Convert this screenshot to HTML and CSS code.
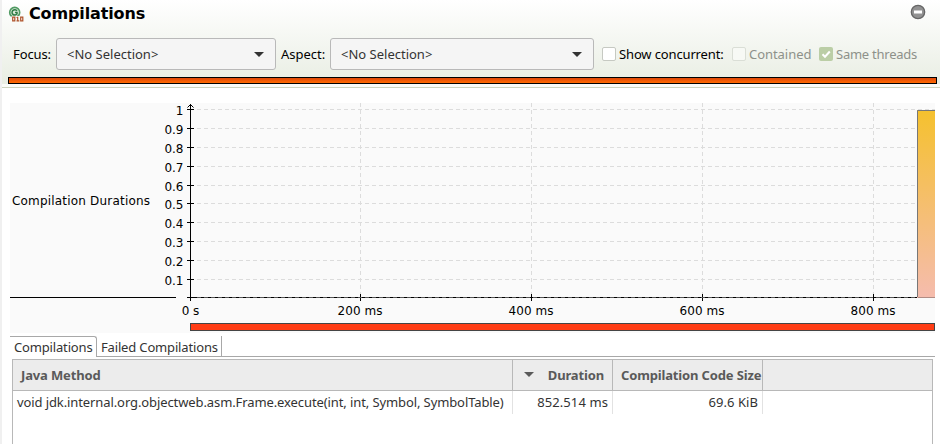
FILE: index.html
```
<!DOCTYPE html>
<html lang="en">
<head>
<meta charset="utf-8">
<title>Compilations</title>
<link rel="stylesheet" href="styles.css">
</head>
<body>
<main class="page">
  <header class="header">
    <div class="title-row">
      <svg class="logo" width="16" height="16" viewBox="0 0 16 16">
        <circle cx="6.700" cy="6.400" r="5" fill="#dcebdc" stroke="#4f9a62" stroke-width="1.600"/>
        <path d="M9 4.900A2.700 2.700 0 1 0 9 7.900V6.600H7" fill="none" stroke="#2f7d45" stroke-width="1.500"/>
        <path d="M3.500 10h12v6h-12z" fill="#f7faf5"/>
        <path d="M4.700 11.200h2.100v3.600h-2.100zM12.700 11.200h2.100v3.600h-2.100zM9.700 10.700v4.600M8.500 11.500h1.200M8.500 14.800h2.800" fill="none" stroke="#b0532c" stroke-width="1.200"/>
      </svg>
      <h1 class="title">Compilations</h1>
      <svg class="collapse" width="16" height="16" viewBox="0 0 16 16">
        <circle cx="8" cy="8" r="6.700" fill="#929292" stroke="#666" stroke-width="1.300"/>
        <rect x="4" y="6.500" width="8" height="3" fill="#fff"/>
      </svg>
    </div>
    <div class="controls">
      <span class="label focus">Focus:</span>
      <div class="select first"><span class="value">&lt;No Selection&gt;</span><i class="arrow"></i></div>
      <span class="label aspect">Aspect:</span>
      <div class="select second"><span class="value">&lt;No Selection&gt;</span><i class="arrow"></i></div>
      <i class="box"></i><span class="label concurrent">Show concurrent:</span>
      <i class="box off"></i><span class="label muted contained">Contained</span>
      <i class="box checked"><svg width="14" height="14" viewBox="0 0 14 14"><path d="M3.500 7.200l2.500 2.500 4.800-5.200" fill="none" stroke="#fff" stroke-width="2"/></svg></i><span class="label muted threads">Same threads</span>
    </div>
    <div class="range"></div>
  </header>

  <svg class="chart" width="925" height="230" viewBox="10 103 925 230">
    <defs>
      <linearGradient id="fill" x1="0" y1="0" x2="0" y2="1">
        <stop offset="0" stop-color="#f5c12e"/><stop offset="1" stop-color="#f5bcae"/>
      </linearGradient>
    </defs>
    <rect x="10" y="103" width="925" height="230" fill="#fafafa"/>
    <path class="grid" d="M197 109.500H935M197 128.500H935M197 147.500H935M197 166.500H935M197 185.500H935M197 203.500H935M197 222.500H935M197 241.500H935M197 260.500H935M197 279.500H935M360.500 103V297M531.500 103V297M702.500 103V297M873.500 103V297"/>
    <path class="axis" d="M10 297.500H176M187 297.500H935M190.500 104V301M187.500 107.500l3-3 3 3M187 109.500h7M187 128.500h7M187 147.500h7M187 166.500h7M187 185.500h7M187 203.500h7M187 222.500h7M187 241.500h7M187 260.500h7M187 279.500h7M360.500 294v7M531.500 294v7M702.500 294v7M873.500 294v7"/>
    <path d="M197 297.500H917" stroke="#555" stroke-dasharray="4 3"/>
    <rect x="917" y="110" width="18" height="188" fill="url(#fill)"/>
    <path d="M935 110.500H917.500V297" fill="none" stroke="#777"/>
    <path d="M918 297.500h17" stroke="#b08c84"/>
    <rect x="190.500" y="323.500" width="744" height="7" fill="#ff3c14" stroke="#444"/>
    <text x="12" y="205" textLength="138">Compilation Durations</text>
    <g text-anchor="end">
      <text x="183.500" y="115">1</text>
      <text x="183.500" y="134">0.9</text>
      <text x="183.500" y="153">0.8</text>
      <text x="183.500" y="172">0.7</text>
      <text x="183.500" y="191">0.6</text>
      <text x="183.500" y="209">0.5</text>
      <text x="183.500" y="228">0.4</text>
      <text x="183.500" y="247">0.3</text>
      <text x="183.500" y="266">0.2</text>
      <text x="183.500" y="285">0.1</text>
    </g>
    <g text-anchor="middle">
      <text x="190.500" y="315">0 s</text>
      <text x="360" y="315" textLength="45">200 ms</text>
      <text x="531" y="315" textLength="45">400 ms</text>
      <text x="702" y="315" textLength="45">600 ms</text>
      <text x="873" y="315" textLength="45">800 ms</text>
    </g>
  </svg>

  <nav class="tabs">
    <div class="tab active"><span>Compilations</span></div>
    <div class="tab"><span class="failed">Failed Compilations</span></div>
    <div class="tab-rest"></div>
  </nav>

  <section class="table">
    <div class="row head">
      <div class="cell"><span class="h-method">Java Method</span></div>
      <div class="cell right"><i class="sort"></i><span class="h-duration">Duration</span></div>
      <div class="cell size"><span class="h-size">Compilation Code Size</span></div>
      <div class="cell last"></div>
    </div>
    <div class="row body">
      <div class="cell"><span class="method">void jdk.internal.org.objectweb.asm.Frame.execute(int, int, Symbol, SymbolTable)</span></div>
      <div class="cell right"><span class="duration">852.514 ms</span></div>
      <div class="cell right"><span class="kib">69.6 KiB</span></div>
      <div class="cell last"></div>
    </div>
  </section>
</main>
</body>
</html>
```
FILE: styles.css
```
* { box-sizing: border-box; }
body {
  margin: 0;
  background: #fff;
  font: 13px/18px "Noto Sans", "Open Sans", sans-serif;
  color: #333;
}
.page {
  height: 444px;
  overflow: hidden;
  border-left: 2px solid #f0f0f0;
  white-space: nowrap;
}
.header {
  height: 88px;
  background: linear-gradient(#fff, #e8ede2);
  border-bottom: 1px solid #cdd3bf;
  box-shadow: inset 0 -3px #fafbf7;
}
.title-row { display: flex; height: 38px; padding: 5px 14px 0 6px; }
.logo { margin-top: 1px; }
.title {
  margin: -1px 0 0 5px;
  font: bold 16px/20px "DejaVu Sans", sans-serif;
  letter-spacing: -0.13px;
  color: #000;
}
.collapse { margin: -1px 0 0 auto; }
.controls { display: flex; align-items: center; height: 32px; padding-left: 11px; }
.label { color: #000; flex: none; }
.label.muted { color: #8d918a; }
.focus { width: 43px; letter-spacing: -0.1px; }
.aspect { width: 49px; margin-left: 5px; }
.concurrent { width: 113px; margin-left: 3px; letter-spacing: -0.14px; }
.contained { width: 70px; margin-left: 3px; letter-spacing: -0.05px; }
.threads { margin-left: 3px; letter-spacing: -0.25px; }
.select {
  display: flex;
  align-items: center;
  justify-content: space-between;
  height: 32px;
  padding: 0 11px 0 10px;
  border: 1px solid #b9b9b9;
  border-radius: 3px;
  background: #f5f5f5;
}
.first { width: 220px; }
.second { width: 264px; margin-right: 8px; }
.arrow, .sort {
  border: 5px solid transparent;
  border-top-color: #333;
  border-bottom: 0;
}
.box {
  flex: none;
  width: 14px;
  height: 14px;
  border: 1px solid #c6c9c2;
  border-radius: 2px;
  background: #fff;
}
.box.off { background: #f7f9f5; border-color: #dadeD6; }
.box.checked { border: 0; background: #bbcea6; }
.box svg { display: block; }
.range {
  height: 7px;
  margin: 7px 3px 0 6px;
  border: 1px solid #000;
  background: linear-gradient(#e04808, #ff6a00);
}
.chart {
  display: block;
  margin: 15px 0 0 8px;
  font: 12px "DejaVu Sans", sans-serif;
  fill: #000;
}
.grid { stroke: #dcdcdc; stroke-dasharray: 4 3; }
.axis { fill: none; stroke: #000; }
.tabs { display: flex; height: 21px; margin: 3px 5px 0 8px; }
.tab {
  display: flex;
  align-items: center;
  width: 125px;
  padding: 2px 0 0 4px;
  border-right: 1px solid #a8a8a8;
  border-bottom: 1px solid #a8a8a8;
  letter-spacing: -0.16px;
}
.tab.active {
  width: 87px;
  padding-top: 0;
  border-top: 1px solid #a8a8a8;
  border-bottom: 0;
  border-radius: 0 3px 0 0;
}
.tab-rest { flex: 1; border-bottom: 1px solid #a8a8a8; }
.table {
  width: 921px;
  height: 100px;
  margin: 2px 0 0 10px;
  border: 1px solid #b8b8b8;
}
.row { display: grid; grid-template-columns: 500px 100px 150px 1fr; }
.head {
  height: 31px;
  background: #ececec;
  border-bottom: 1px solid #b8b8b8;
  color: #5a5a5a;
  font-weight: bold;
  letter-spacing: -0.15px;
}
.body { height: 23px; }
.cell {
  display: flex;
  align-items: center;
  padding-left: 4px;
  padding-bottom: 2px;
  border-right: 1px solid #e2e2e2;
}
.head .cell { border-color: #b8b8b8; padding-left: 8px; padding-bottom: 1px; }
.row .cell.last { border: 0; }
.right { justify-content: flex-end; padding-right: 4px; }
.head .right { justify-content: space-between; padding: 0 8px 1px 11px; }
.sort { border-top-color: #5a5a5a; }
.method { letter-spacing: -0.1px; }
.duration { letter-spacing: 0.1px; }
.kib { letter-spacing: 0.05px; }
```
